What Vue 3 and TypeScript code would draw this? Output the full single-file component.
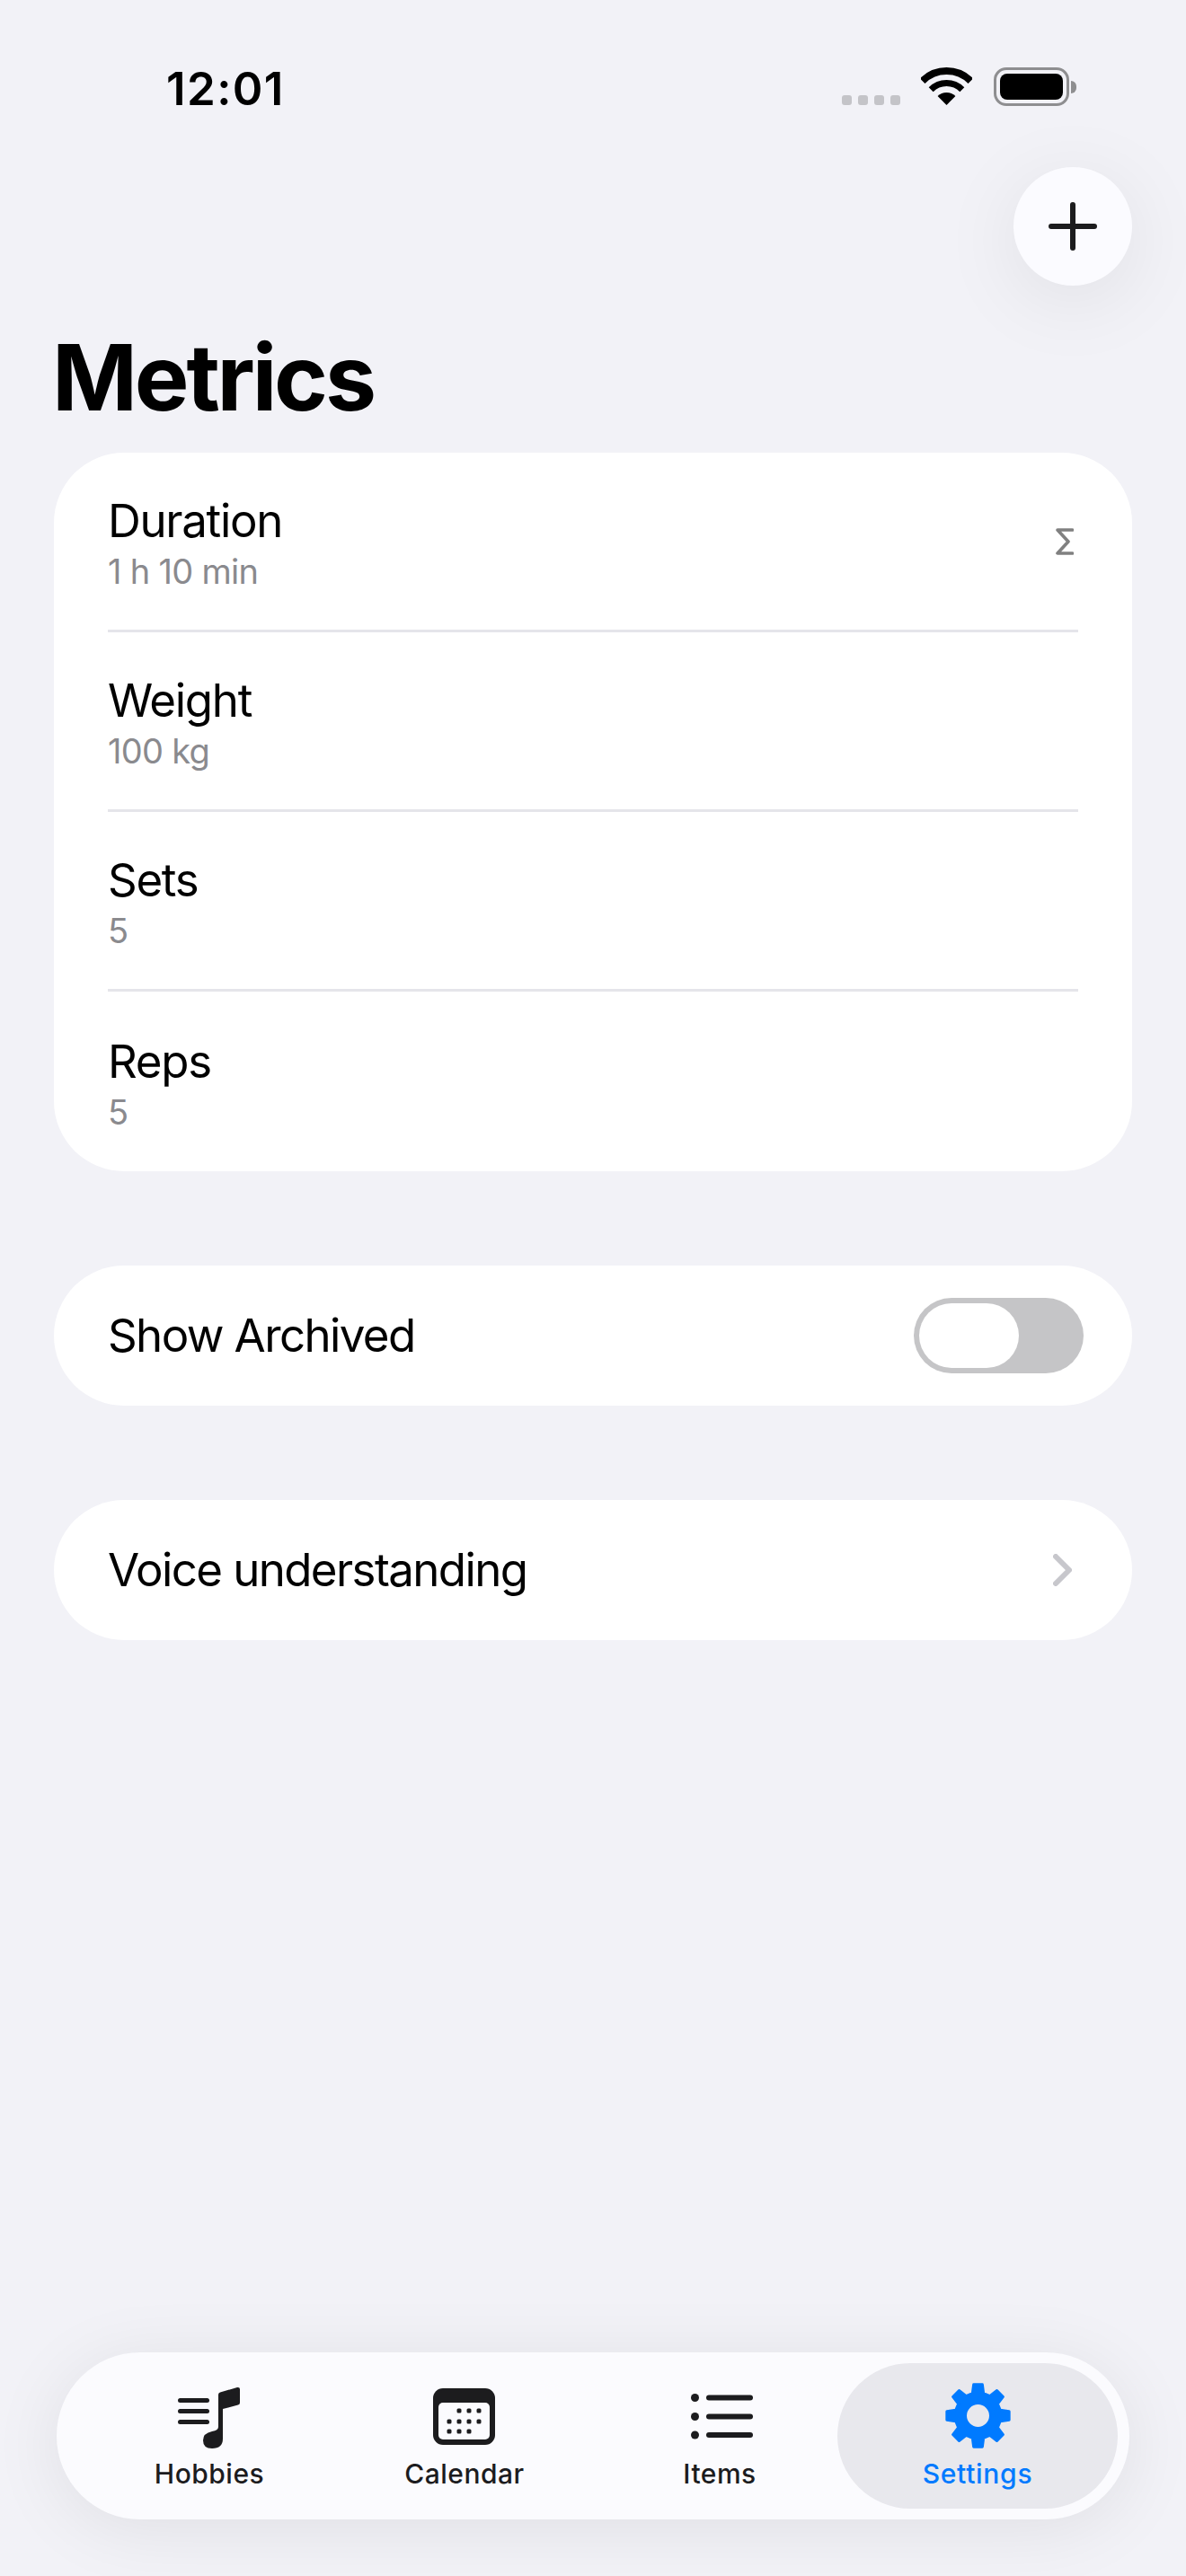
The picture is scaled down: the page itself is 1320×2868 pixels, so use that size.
<script setup lang="ts">
const metrics = [
  { id: 1, name: 'Duration', value: '1 h 10 min', sum: true },
  { id: 2, name: 'Weight', value: '100 kg', sum: false },
  { id: 3, name: 'Sets', value: '5', sum: false },
  { id: 4, name: 'Reps', value: '5', sum: false },
];

const calendarDots = [
  [29, 25], [40, 25], [51, 25],
  [18, 37], [29, 37], [40, 37], [51, 37],
  [18, 48], [29, 48], [40, 48],
];

// 8 toothed gear, drawn around 36.5/36.5, the hole is cut with evenodd
const gearPath = () => {
  const c = 36.5;
  const pt = (r: number, deg: number) => {
    const a = (deg * Math.PI) / 180;
    return `${(c + r * Math.sin(a)).toFixed(2)} ${(c - r * Math.cos(a)).toFixed(2)}`;
  };
  let d = '';
  for (let i = 0; i < 8; i++) {
    const m = i * 45;
    d += `${i === 0 ? 'M' : 'L'}${pt(25.5, m - 14)} L${pt(35, m - 8)} L${pt(35, m + 8)} L${pt(25.5, m + 14)} `;
  }
  d += 'Z M' + pt(14, 0);
  d += ` A14 14 0 1 0 ${pt(14, 180)} A14 14 0 1 0 ${pt(14, 0)} Z`;
  return d;
};
</script>

<template>
  <div class="page">
    <header class="status">
      <span class="time">12:01</span>
      <div class="signal">
        <i v-for="n in 4" :key="n"></i>
      </div>
      <svg class="wifi" width="57" height="42" viewBox="0 0 57 42">
        <path d="M1.63 15.13A38 38 0 0 1 55.37 15.13" fill="none" stroke="#000" stroke-width="8" />
        <path d="M11.18 24.68A24.5 24.5 0 0 1 45.82 24.68" fill="none" stroke="#000" stroke-width="7" />
        <path d="M28.5 42L18.6 32.1A14 14 0 0 1 38.4 32.1Z" fill="#000" />
      </svg>
      <div class="battery">
        <div class="batteryBody"><div class="batteryFill"></div></div>
        <div class="batteryTip"></div>
      </div>
    </header>

    <button type="button" class="fab" aria-label="Add">
      <svg width="54" height="54" viewBox="0 0 54 54">
        <path d="M27 3V51M3 27H51" stroke="#1c1c1e" stroke-width="6" stroke-linecap="round" />
      </svg>
    </button>

    <h1 class="title">Metrics</h1>

    <section class="card">
      <div v-for="item in metrics" :key="item.id" class="metric">
        <div class="metricText">
          <div class="metricName">{{ item.name }}</div>
          <div class="metricValue">{{ item.value }}</div>
        </div>
        <svg v-if="item.sum" class="sigma" width="20" height="32" viewBox="0 0 20 32" aria-label="Sum">
          <path d="M18.5 3H2L14 16L2 29H18.5" fill="none" stroke="#808080" stroke-width="3.6" stroke-linecap="round" stroke-linejoin="round" />
        </svg>
      </div>
    </section>

    <section class="card pill">
      <span>Show Archived</span>
      <div class="toggle"><div class="knob"></div></div>
    </section>

    <section class="card pill">
      <span>Voice understanding</span>
      <svg class="chevron" width="21" height="36" viewBox="0 0 21 36">
        <path d="M3 3L18 18L3 33" fill="none" stroke="#c7c7cc" stroke-width="6" stroke-linecap="round" stroke-linejoin="round" />
      </svg>
    </section>

    <nav class="tabbar">
      <div class="tab">
        <svg width="70" height="70" viewBox="0 0 70 70">
          <rect x="0" y="13" width="35" height="5" rx="2.5" fill="#1c1c1e" />
          <rect x="0" y="25" width="35" height="5" rx="2.5" fill="#1c1c1e" />
          <rect x="0" y="37" width="35" height="5" rx="2.5" fill="#1c1c1e" />
          <path d="M45 9Q45 7 47 6.5L66 1Q69 .5 69 3V18Q69 20 67 20.5L50 25V58Q50 69 38 69Q28 69 28 60Q28 52 38 50Q45 49 45 45Z" fill="#1c1c1e" />
        </svg>
        <span>Hobbies</span>
      </div>
      <div class="tab">
        <svg width="70" height="70" viewBox="0 0 70 70">
          <g transform="translate(0 2)">
            <rect x="0" y="0" width="69" height="63" rx="11" fill="#1c1c1e" />
            <rect x="6" y="16" width="57" height="41" rx="5" fill="#fbfbfe" />
            <rect v-for="(d, i) in calendarDots" :key="i" :x="d[0] - 2.5" :y="d[1] - 2.5" width="5" height="5" rx="1.5" fill="#1c1c1e" />
          </g>
        </svg>
        <span>Calendar</span>
      </div>
      <div class="tab">
        <svg class="itemsIcon" width="70" height="70" viewBox="0 0 70 70">
          <g transform="translate(0 8)">
            <circle cx="4.5" cy="4.5" r="4.5" fill="#1c1c1e" />
            <circle cx="4.5" cy="25.5" r="4.5" fill="#1c1c1e" />
            <circle cx="4.5" cy="46" r="4.5" fill="#1c1c1e" />
            <rect x="17" y="1.5" width="52" height="6" rx="3" fill="#1c1c1e" />
            <rect x="17" y="22.5" width="52" height="6" rx="3" fill="#1c1c1e" />
            <rect x="17" y="43" width="52" height="6" rx="3" fill="#1c1c1e" />
          </g>
        </svg>
        <span>Items</span>
      </div>
      <div class="tab active">
        <svg width="73" height="73" viewBox="0 0 73 73">
          <path :d="gearPath()" fill="#007aff" fill-rule="evenodd" stroke="#007aff" stroke-width="3" stroke-linejoin="round" />
        </svg>
        <span>Settings</span>
      </div>
    </nav>
  </div>
</template>

<style>
body {
  background: #f2f2f7;
}
</style>

<style scoped>
.page {
  display: flex;
  flex-direction: column;
  height: 2868px;
  box-sizing: border-box;
  padding: 75px 60px 63px;
  background: #f2f2f7;
  font-family: Inter, "Liberation Sans", sans-serif;
  color: #000;
  overflow: hidden;
}

.status {
  display: flex;
  align-items: flex-start;
  height: 43px;
}

.time {
  margin-left: 125px;
  margin-top: -4px;
  margin-right: auto;
  font-size: 51px;
  line-height: 56px;
  font-weight: 600;
  letter-spacing: 1.4px;
}

.signal {
  display: flex;
  gap: 7px;
  margin-top: 31px;
  margin-right: 23px;

  i {
    display: block;
    width: 11px;
    height: 11px;
    border-radius: 3px;
    background: #c4c4c8;
  }
}

.wifi {
  margin-right: 24px;
}

.battery {
  display: flex;
  align-items: center;
  margin-right: 62px;
}

.batteryBody {
  width: 84px;
  height: 43px;
  box-sizing: border-box;
  border: 3px solid #8e8e90;
  border-radius: 14px;
  padding: 4px;
}

.batteryFill {
  height: 100%;
  background: #000;
  border-radius: 8px;
}

.batteryTip {
  width: 6px;
  height: 14px;
  margin-left: 2px;
  background: #8e8e90;
  border-radius: 0 7px 7px 0;
}

.fab {
  display: flex;
  align-items: center;
  justify-content: center;
  align-self: flex-end;
  flex: none;
  width: 132px;
  height: 132px;
  margin-top: 68px;
  padding: 0;
  border: none;
  border-radius: 50%;
  background: #fbfbff;
  box-shadow: 0 16px 90px rgba(0, 0, 0, 0.08);
}

.title {
  margin: 42px 0 24px -2px;
  font-size: 102px;
  line-height: 120px;
  font-weight: 700;
  letter-spacing: -3.2px;
}

.card {
  flex: none;
  background: #fff;
  border-radius: 78px;
  font-size: 51px;
  line-height: 60px;
  letter-spacing: -1.3px;
}

.metric {
  display: flex;
  align-items: center;
  justify-content: space-between;
  box-sizing: border-box;
  height: 200px;
  margin: 0 60px;
  border-bottom: 3px solid #e5e5ea;

  &:last-child {
    border-bottom: none;
  }
}

.metricText {
  padding-top: 4px;
}

.metricName {
  font-size: 51px;
  line-height: 60px;
}

.metricValue {
  margin-top: 3px;
  font-size: 38px;
  line-height: 46px;
  letter-spacing: -0.7px;
  color: #8a8a8e;
}

.sigma {
  margin-right: 5px;
}

.pill {
  display: flex;
  align-items: center;
  justify-content: space-between;
  height: 156px;
  margin-top: 105px;
  padding: 0 54px 0 60px;
  letter-spacing: -1.6px;
}

.toggle {
  box-sizing: border-box;
  width: 189px;
  height: 84px;
  padding: 6px;
  border-radius: 42px;
  background: #c5c5c7;
}

.knob {
  width: 111px;
  height: 72px;
  border-radius: 36px;
  background: #fff;
}

.chevron {
  margin-right: 13px;
}

.tabbar {
  display: flex;
  flex: none;
  box-sizing: border-box;
  width: 1194px;
  height: 186px;
  margin-top: auto;
  margin-left: 3px;
  padding: 12px 12px 12px 28px;
  border-radius: 93px;
  background: #fbfbfe;
  box-shadow: 0 10px 80px rgba(0, 0, 0, 0.08);
}

.tab {
  display: flex;
  flex-direction: column;
  align-items: center;
  flex: none;
  width: 284px;
  padding-top: 26px;
  font-size: 30px;
  line-height: 36px;
  font-weight: 450;
  letter-spacing: 0.5px;
  color: #1c1c1e;

  svg {
    display: block;
    margin-bottom: 9px;
  }

  .itemsIcon {
    margin-left: 6px;
  }
}

.active {
  width: 312px;
  margin-left: -11px;
  padding-top: 22px;
  border-radius: 81px;
  background: #e8e8ed;
  font-weight: 500;
  letter-spacing: 0.7px;
  color: #007aff;

  svg {
    margin-bottom: 10px;
  }
}
</style>
